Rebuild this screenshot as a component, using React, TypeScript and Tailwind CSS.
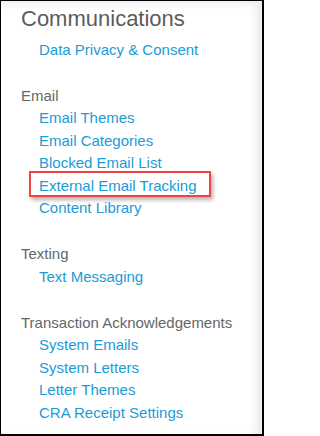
const groups = [
  {
    title: 'Email',
    links: ['Email Themes', 'Email Categories', 'Blocked Email List', 'External Email Tracking', 'Content Library'],
  },
  { title: 'Texting', links: ['Text Messaging'] },
  {
    title: 'Transaction Acknowledgements',
    links: ['System Emails', 'System Letters', 'Letter Themes', 'CRA Receipt Settings'],
  },
];

const highlighted = 'External Email Tracking';

const NavLink = ({ label }: { label: string }) => (
  <div className="relative pl-[18px]">
    <a href="#" className="text-[#1b9bd7] hover:underline">
      {label}
    </a>
    {label === highlighted && (
      <div className="pointer-events-none absolute left-[8px] top-[-4px] h-[26px] w-[182px] border-2 border-[#ef4444] shadow-[2px_3px_4px_rgba(0,0,0,0.3)]" />
    )}
  </div>
);

export default function App() {
  return (
    <div
      className="w-[264px] h-[436px] overflow-hidden bg-white border-t border-l border-b-2 border-r-2 border-black shadow-[inset_-7px_3px_7px_rgba(0,0,0,0.07)]"
      style={{ fontFamily: '"Liberation Sans", Arial, sans-serif' }}
    >
      <div className="pl-5 pt-[5px]">
        <h1 className="text-[22px] leading-[26px] text-[#5c5c5c]">Communications</h1>
        <div className="mt-[6.5px] text-[15px] leading-[22.5px]">
          <NavLink label="Data Privacy & Consent" />
        </div>

        {groups.map((group) => (
          <div key={group.title} className="mt-[23.5px] text-[15px] leading-[22.5px]">
            <div className="text-[#666666]">{group.title}</div>
            {group.links.map((link) => (
              <NavLink key={link} label={link} />
            ))}
          </div>
        ))}
      </div>
    </div>
  );
}
